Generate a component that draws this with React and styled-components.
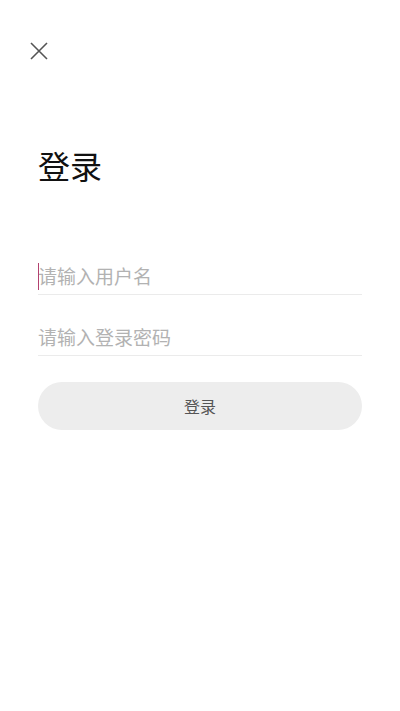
import React from "react";
import styled, { createGlobalStyle } from "styled-components";

const GlobalStyle = createGlobalStyle`
  html, body {
    margin: 0;
    padding: 0;
    background: #ffffff;
    font-family: "Noto Sans CJK SC", "Noto Sans", sans-serif;
  }
`;

const Page = styled.div`
  width: 400px;
  height: 711px;
  background: #ffffff;
  box-sizing: border-box;
  padding: 0 38px;
  display: flex;
  flex-direction: column;
`;

const CloseButton = styled.button`
  width: 24px;
  height: 24px;
  margin: 39px 0 0 -11px;
  padding: 0;
  border: none;
  background: none;
  display: flex;
  align-items: center;
  justify-content: center;
  cursor: pointer;
`;

const Title = styled.h1`
  margin: 86px 0 0;
  font-size: 32px;
  line-height: 32px;
  font-weight: 400;
  color: #111;
`;

const Form = styled.form`
  display: flex;
  flex-direction: column;
  margin-top: 79px;
`;

const Field = styled.div`
  position: relative;
  height: 34px;
  border-bottom: 1px solid #ebebeb;
  margin-bottom: ${(p) => p.$gap || 0}px;
`;

const Input = styled.input`
  width: 100%;
  height: 100%;
  box-sizing: border-box;
  border: none;
  outline: none;
  padding: 0 0 3px;
  background: transparent;
  font-family: "Noto Sans CJK SC", "Noto Sans", sans-serif;
  font-size: 19px;
  color: #333;
  caret-color: transparent;

  &::placeholder {
    color: #b2b2b2;
  }
`;

const Caret = styled.span`
  position: absolute;
  left: 0;
  top: 3px;
  width: 1px;
  height: 27px;
  background: #b3416f;
`;

const Submit = styled.button`
  margin-top: 26px;
  height: 48px;
  border: none;
  border-radius: 24px;
  background: #ededed;
  color: #555;
  font-family: "Noto Sans CJK SC", "Noto Sans", sans-serif;
  font-size: 16px;
  cursor: pointer;
`;

const App = () => {
  return (
    <>
      <GlobalStyle />
      <Page>
        <CloseButton aria-label="关闭">
          <svg width="18" height="18" viewBox="0 0 18 18">
            <path d="M1 1L17 17M17 1L1 17" stroke="#555" strokeWidth="1.6" />
          </svg>
        </CloseButton>
        <Title>登录</Title>
        <Form>
          <Field $gap={26}>
            <Input placeholder="请输入用户名" />
            <Caret />
          </Field>
          <Field>
            <Input type="password" placeholder="请输入登录密码" />
          </Field>
          <Submit type="button">登录</Submit>
        </Form>
      </Page>
    </>
  );
};

export default App;
